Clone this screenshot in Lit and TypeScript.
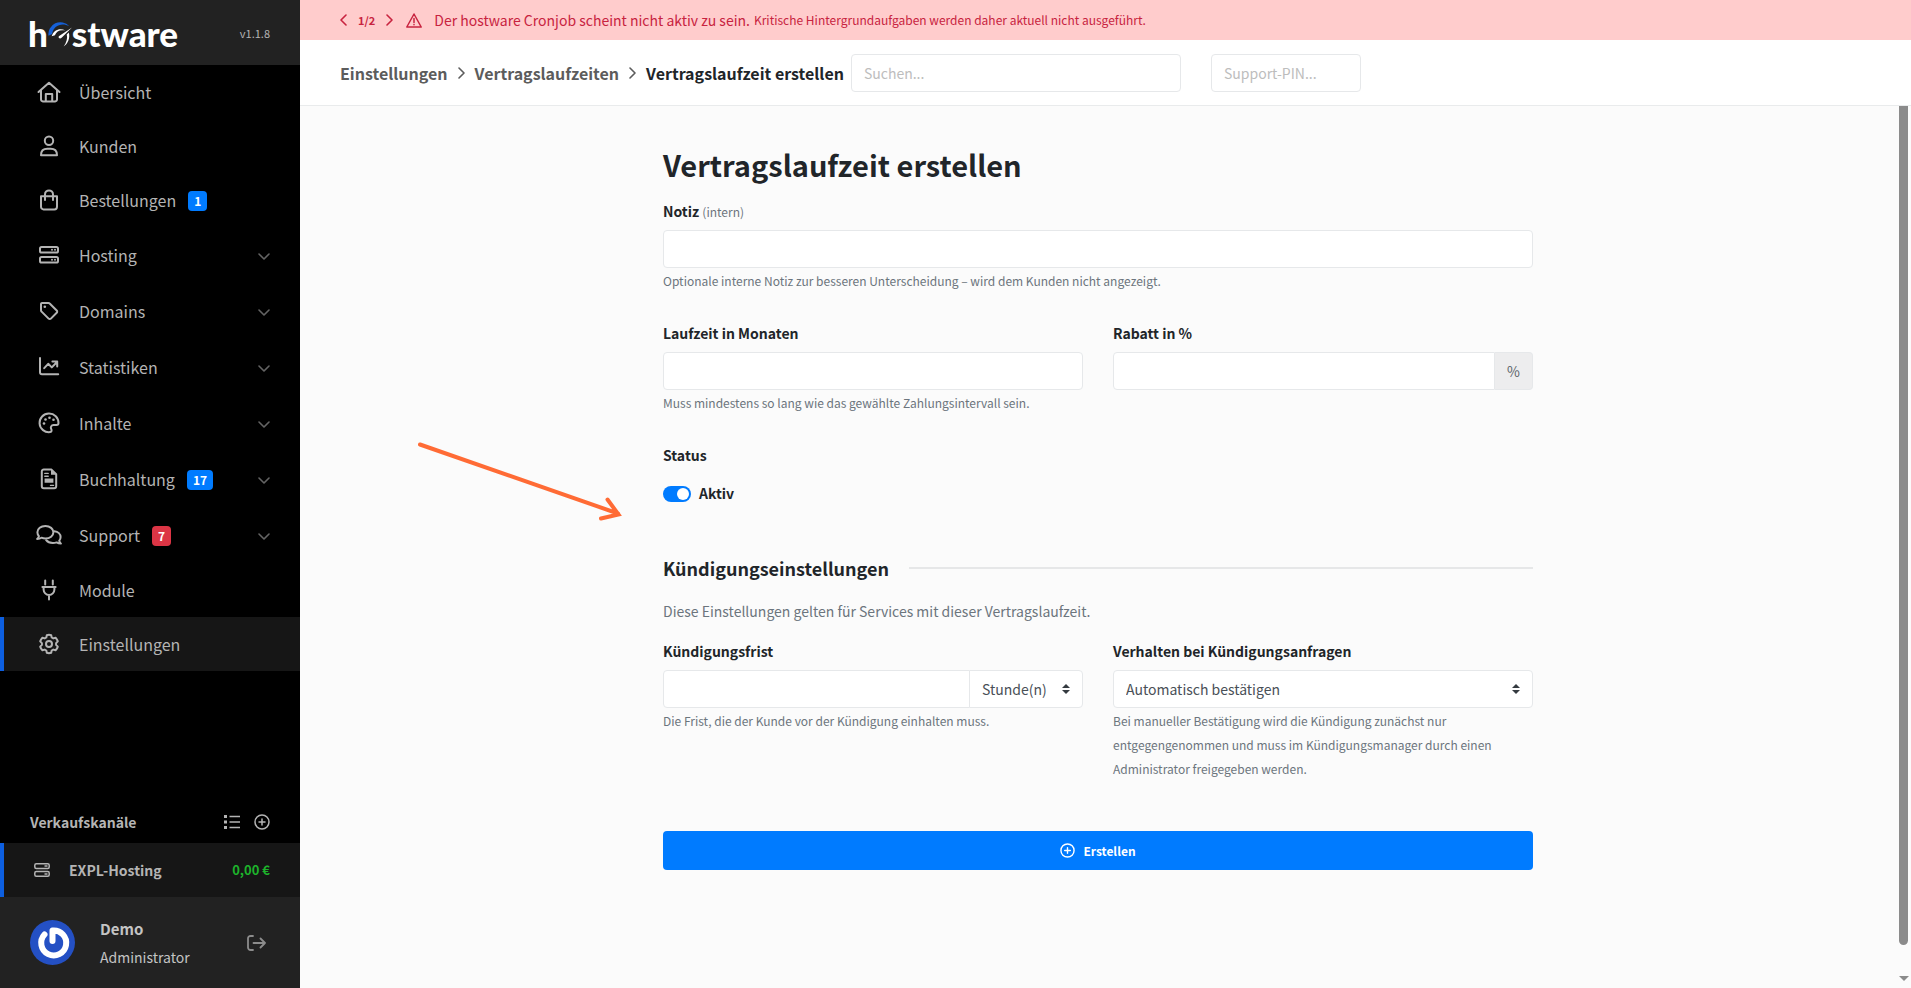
import { LitElement, html, svg, css, nothing, TemplateResult } from "lit";
import { customElement, property } from "lit/decorators.js";

const stroke = (body: TemplateResult) => svg`<g fill="none" stroke="currentColor" stroke-width="2" stroke-linecap="round" stroke-linejoin="round">${body}</g>`;

/* Navigation glyphs, drawn in a 26 x 22 box. */
const glyphs: Record<string, TemplateResult> = {
  home: stroke(svg`<path d="M2.5 11 13 1.8 23.5 11M5 9v9.6a1.8 1.8 0 0 0 1.8 1.8h12.4a1.8 1.8 0 0 0 1.8-1.8V9M9.8 20v-7h6.4v7"/>`),
  user: stroke(svg`<circle cx="13" cy="5.8" r="4.2"/><path d="M5 20.2c0-4.2 2.6-6.4 6.4-6.4h3.2c3.8 0 6.4 2.2 6.4 6.4z"/>`),
  bag: stroke(svg`<path d="M5 7.2h16v10.6a2.6 2.6 0 0 1-2.6 2.6H7.6a2.6 2.6 0 0 1-2.6-2.6zM9 11V5.4a4 4 0 0 1 8 0V11"/>`),
  server: svg`${stroke(svg`<rect x="4" y="3" width="18" height="5.6" rx="1.6"/><rect x="4" y="13" width="18" height="5.6" rx="1.6"/>`)}<g fill="currentColor"><circle cx="16" cy="5.8" r="1"/><circle cx="19" cy="5.8" r="1"/><circle cx="16" cy="15.8" r="1"/><circle cx="19" cy="15.8" r="1"/></g>`,
  tag: svg`${stroke(svg`<path d="M5 3.8v6.5c0 .5.2 1 .6 1.3l7 7a1.600 1.600 0 0 0 2.300 0l5.800-5.800a1.600 1.600 0 0 0 0-2.300l-7-7a1.800 1.800 0 0 0-1.300-.600H6a1 1 0 0 0-1 .900z"/>`)}<circle cx="8.8" cy="6.7" r="1.3" fill="currentColor"/>`,
  chart: stroke(svg`<path d="M4 2v14.2a2 2 0 0 0 2 2h16.2M8.2 12.200l4-4.400 3.600 3.600 5-5.200M16.400 5.600h4.800v4.800"/>`),
  palette: svg`${stroke(svg`<path d="M13 1.600a9.300 9.300 0 1 0 1.200 18.500c1.500-.2 1.700-1.800 1-3-1-1.900.1-4 2.300-4h3c1.200 0 2-.8 2-2C22.500 5.700 18.300 1.600 13 1.600z"/>`)}<g fill="currentColor"><circle cx="8" cy="11.5" r="1.3"/><circle cx="9.5" cy="7.5" r="1.3"/><circle cx="13.5" cy="5.800" r="1.3"/><circle cx="17.5" cy="7.8" r="1.3"/></g>`,
  invoice: svg`${stroke(svg`<path d="M8 1.600h7.500L20.200 6.300v12a2 2 0 0 1-2 2H7.800a2 2 0 0 1-2-2v-14.700a2 2 0 0 1 2.200-2z"/><path d="M8.800 5.400h3.400M8.800 8.200h3.400M14.500 17.400h3" stroke-width="1.4"/>`)}<path d="M15 1.600v5.200h5.200zM8.600 10.400h8.800v4.400H8.600z" fill="currentColor"/>`,
  chat: stroke(svg`<path d="M9.400 2c-4.600 0-8 2.800-8 6.300 0 1.500.6 2.800 1.500 3.900-.3 1-.9 1.900-1.700 2.800 1.700 0 3.200-.5 4.300-1.300 1.200.5 2.500.8 3.900.8 4.600 0 8-2.800 8-6.200S14 2 9.400 2z"/><path d="M18.400 7.200c3.700.4 6.200 2.800 6.200 5.900 0 1.400-.5 2.700-1.400 3.700.3 1 .9 2 1.700 2.800-1.700 0-3.200-.5-4.300-1.200a10 10 0 0 1-3.800.7c-3 0-5.300-1.100-6.600-2.900"/>`),
  plug: stroke(svg`<path d="M9.200 1.400v4M16.800 1.400v4M6.400 8h13.200M7.600 8v2.600a5.400 5.400 0 0 0 10.800 0V8M13 16v4.400"/>`),
  gear: stroke(svg`<path d="M10.800 2.200c1.400-.5 3-.5 4.400 0l.5 2.300 1.600.9 2.300-.7a8.600 8.600 0 0 1 2.200 3.700l-1.700 1.700v1.800l1.700 1.700a8.600 8.600 0 0 1-2.200 3.700l-2.300-.7-1.600.9-.5 2.300c-1.400.5-3 .5-4.400 0l-.5-2.300-1.600-.9-2.300.7a8.600 8.600 0 0 1-2.200-3.700l1.700-1.700v-1.800L4.200 8.400a8.600 8.600 0 0 1 2.200-3.700l2.300.7 1.600-.9z"/><circle cx="13" cy="11" r="3"/>`),
};

interface NavEntry {
  label: string;
  icon: string;
  badge?: string;
  tone?: string;
  sub?: boolean;
  active?: boolean;
}

const entries: NavEntry[] = [
  { label: "Übersicht", icon: "home" },
  { label: "Kunden", icon: "user" },
  { label: "Bestellungen", icon: "bag", badge: "1" },
  { label: "Hosting", icon: "server", sub: true },
  { label: "Domains", icon: "tag", sub: true },
  { label: "Statistiken", icon: "chart", sub: true },
  { label: "Inhalte", icon: "palette", sub: true },
  { label: "Buchhaltung", icon: "invoice", badge: "17", sub: true },
  { label: "Support", icon: "chat", badge: "7", tone: "red", sub: true },
  { label: "Module", icon: "plug" },
  { label: "Einstellungen", icon: "gear", active: true },
];

const plusCircle = (size: number) => html`<svg width=${size} height=${size} viewBox="0 0 16 16" fill="none" stroke="currentColor" stroke-width="1.5" stroke-linecap="round" aria-hidden="true"><circle cx="8" cy="8" r="7"/><path d="M8 5v6M5 8h6"/></svg>`;

const chevron = (d: string, w: number, h: number) => html`<svg width=${w} height=${h} viewBox="0 0 ${w} ${h}" fill="none" stroke="currentColor" stroke-width="1.6" stroke-linecap="round" stroke-linejoin="round" aria-hidden="true"><path d=${d}/></svg>`;

const shared = css`
  * { box-sizing: border-box; }
  a { color: inherit; text-decoration: none; }
  button { font: inherit; color: inherit; background: none; border: 0; padding: 0; cursor: pointer; }
  svg { display: block; flex: none; }
`;

@customElement("app-sidebar")
export class AppSidebar extends LitElement {
  static styles = [shared, css`
    :host { display: flex; flex-direction: column; width: 300px; flex: none; background: #000; color: #b4b4b4; }
    .brand { display: flex; align-items: center; justify-content: space-between; height: 65px; padding: 0 30px 0 28px; background: #222; }
    .logo { display: flex; align-items: center; color: #fff; font: 900 35px/40px Lato, sans-serif; }
    .version { font-size: 11px; line-height: 24px; }
    .item { display: flex; align-items: center; height: 54px; padding: 0 30px 0 32px; border-left: 4px solid transparent; font-size: 16px; line-height: 24px; }
    .item.sub { height: 56px; }
    .item.active { background: #161616; border-left-color: #0d5fe0; }
    .icon { margin-right: 17px; }
    .badge { margin: 2px 0 0 12px; padding: 0 6px; border-radius: 4px; background: #007bff; color: #fff; font-size: 12px; font-weight: 700; line-height: 20px; }
    .badge.red { background: #dc3545; }
    .caret { margin-left: auto; padding-top: 2px; color: #646464; }
    .channels { margin-top: auto; }
    .channels-head { display: flex; align-items: center; gap: 14px; height: 42px; padding: 0 30px; font-size: 14px; font-weight: 600; }
    .channels-head span { flex: 1; }
    .channel { display: flex; align-items: center; height: 54px; padding: 0 30px; border-left: 4px solid #0d5fe0; background: #161616; font-size: 14px; font-weight: 700; line-height: 24px; }
    .channel span { flex: 1; margin-left: 19px; }
    .channel em { font-style: normal; font-weight: 600; font-size: 13px; color: #1db32b; }
    .account { display: flex; align-items: center; height: 91px; padding: 0 34px 0 30px; background: #222; color: #c4c4c4; }
    .who { flex: 1; margin-left: 25px; font-size: 14px; line-height: 28px; }
    .who strong { display: block; font-size: 15px; }
    .out { color: #8c8c8c; }
  `];

  render() {
    return html`
      <div class="brand">
        <a class="logo" href="#" aria-label="hostware">
          <span>h</span>
          <svg width="24" height="32" viewBox="0 0 26 34">
            <path d="M.5 20A13 13 0 0 1 23 9.500C14.500 5 5.500 9.500 4.500 18z" fill="#1560d8"/>
            <path d="M4 20.500c2-6.500 9-9.500 15-6-5.500-1.500-10 .5-11.500 5z" fill="#fff"/>
            <path d="M12 22.500c-1-1-.5-2 .5-2.600L26 11 15 21.800c-1 1-2.200 1.500-3 .7z" fill="#fff"/>
            <path d="M22.500 16.500c1.800 5.500-1 12.500-5.500 15 3-4.500 4.500-9 3.300-13z" fill="#fff"/>
          </svg>
          <span>stware</span>
        </a>
        <span class="version">v1.1.8</span>
      </div>
      <nav>
        ${entries.map((e) => html`
          <a class="item ${e.sub ? "sub" : ""} ${e.active ? "active" : ""}" href="#">
            <svg class="icon" width="26" height="22" viewBox="0 0 26 22" aria-hidden="true">${glyphs[e.icon]}</svg>
            <span>${e.label}</span>
            ${e.badge ? html`<span class="badge ${e.tone ?? ""}">${e.badge}</span>` : nothing}
            ${e.sub ? html`<span class="caret">${chevron("M1 1 6 6 11 1", 12, 7)}</span>` : nothing}
          </a>`)}
      </nav>
      <div class="channels">
        <div class="channels-head">
          <span>Verkaufskanäle</span>
          <button aria-label="Liste"><svg width="16" height="14" viewBox="0 0 16 14" fill="currentColor"><path d="M0 0h3v3H0zM0 5.500h3v3H0zM0 11h3v3H0zM5.500.800H16v1.500H5.500zM5.500 6.300H16v1.500H5.500zM5.500 11.800H16v1.500H5.500z"/></svg></button>
          <button aria-label="Hinzufügen">${plusCircle(16)}</button>
        </div>
        <a class="channel" href="#">
          <svg width="16" height="14" viewBox="0 0 16 14" fill="none" stroke="currentColor" stroke-width="1.5"><rect x=".8" y=".8" width="14.4" height="4.6" rx="1.5"/><rect x=".8" y="8.6" width="14.4" height="4.6" rx="1.5"/><path d="M10.500 3.100h3M10.500 10.900h3"/></svg>
          <span>EXPL-Hosting</span><em>0,00 €</em>
        </a>
      </div>
      <div class="account">
        <svg width="45" height="45" viewBox="0 0 45 45" role="img" aria-label="Avatar">
          <circle cx="22.5" cy="22.5" r="22.5" fill="#2450c4"/>
          <path d="M14.500 14.500A12.500 12.500 0 1 0 22.500 10.500V21" fill="none" stroke="#fff" stroke-width="6" stroke-linecap="round" stroke-linejoin="round"/>
        </svg>
        <div class="who"><strong>Demo</strong>Administrator</div>
        <button class="out" aria-label="Abmelden"><svg width="19" height="16" viewBox="0 0 19 16" fill="none" stroke="currentColor" stroke-width="1.8" stroke-linecap="round" stroke-linejoin="round"><path d="M6 1H3.500A2.500 2.500 0 0 0 1 3.500v9A2.500 2.500 0 0 0 3.500 15H6M6.500 8H18M13.500 3.500 18 8l-4.500 4.500"/></svg></button>
      </div>`;
  }
}

@customElement("app-topbar")
export class AppTopbar extends LitElement {
  static styles = [shared, css`
    :host { display: block; background: #fff; }
    .alert { display: flex; align-items: center; height: 40px; padding: 0 40px; background: #fcc; color: #c8233f; font-size: 14px; line-height: 24px; }
    .count { margin: 0 11px; font-size: 11px; font-weight: 700; }
    .warn { margin: 0 12px 0 13px; }
    .alert small { font-size: 12px; margin-left: 4px; }
    .bar { display: flex; align-items: center; height: 66px; padding: 0 40px; border-bottom: 1px solid #e9ebec; }
    .crumbs { display: flex; align-items: center; gap: 10px; margin-right: 7px; color: #5c5c5c; font-size: 16px; font-weight: 600; line-height: 24px; white-space: nowrap; }
    .crumbs strong { color: #212529; font-weight: 600; }
    .field { height: 38px; padding: 0 12px; border: 1px solid #e6e8ea; border-radius: 4px; background: #fff; font: inherit; font-size: 14px; color: #495057; }
    .field::placeholder { color: #bdbdbd; opacity: 1; }
    .search { width: 330px; margin-right: 30px; }
    .pin { width: 150px; }
  `];

  render() {
    return html`
      <div class="alert" role="alert">
        <button aria-label="Zurück">${chevron("M6 1 1 6 6 11", 7, 12)}</button>
        <span class="count">1/2</span>
        <button aria-label="Weiter">${chevron("M1 1 6 6 1 11", 7, 12)}</button>
        <svg class="warn" width="16" height="15" viewBox="0 0 16 15" fill="none" stroke="currentColor" stroke-width="1.5" stroke-linecap="round" stroke-linejoin="round"><path d="M8 1 15.200 14H.8zM8 5.500v4M8 11.600v.2"/></svg>
        <span>Der hostware Cronjob scheint nicht aktiv zu sein.</span><small>Kritische Hintergrundaufgaben werden daher aktuell nicht ausgeführt.</small>
      </div>
      <header class="bar">
        <nav class="crumbs">
          <a href="#">Einstellungen</a>${chevron("M1 1 6 6 1 11", 7, 12)}
          <a href="#">Vertragslaufzeiten</a>${chevron("M1 1 6 6 1 11", 7, 12)}
          <strong>Vertragslaufzeit erstellen</strong>
        </nav>
        <input class="field search" type="search" placeholder="Suchen..." aria-label="Suchen">
        <input class="field pin" type="text" placeholder="Support-PIN..." aria-label="Support-PIN">
      </header>`;
  }
}

@customElement("term-form")
export class TermForm extends LitElement {
  static styles = [shared, css`
    :host { display: block; flex: 1; min-width: 0; padding: 0 15px; }
    form { position: relative; max-width: 870px; margin: 0 auto; padding: 40px 0 60px; }
    h1 { margin: 0 0 15px; font-size: 29px; line-height: 36px; font-weight: 700; }
    .row { display: grid; grid-template-columns: 1fr 1fr; gap: 30px; }
    .group { margin-bottom: 26px; min-width: 0; }
    .label { display: block; margin-bottom: 4px; padding: 0; font-size: 14px; line-height: 29px; font-weight: 600; }
    .label small { font-size: 12px; font-weight: 400; color: #6c757d; }
    .control { display: block; width: 100%; min-width: 0; height: 38px; padding: 0 12px; border: 1px solid #e6e8ea; border-radius: 4px; background: #fff; color: #495057; font: inherit; font-size: 14px; }
    select.control { appearance: none; grid-area: 1 / 1; padding-right: 35px; }
    .help { margin: 1px 0 0; color: #6c757d; font-size: 12px; line-height: 24px; }
    .joined { display: flex; }
    .joined .control:first-child { flex: 1; border-radius: 4px 0 0 4px; }
    .joined .picker { margin-left: -1px; }
    .joined .picker .control { border-radius: 0 4px 4px 0; }
    .addon { display: flex; align-items: center; padding: 0 12px; border: 1px solid #e6e8ea; border-left: 0; border-radius: 0 4px 4px 0; background: #ededee; color: #5f656b; font-size: 14px; }
    .picker { display: grid; }
    .picker svg { grid-area: 1 / 1; align-self: center; justify-self: end; margin-right: 13px; color: #343a40; pointer-events: none; }
    fieldset { margin: 0 0 42px; padding: 0; border: 0; }
    .switch { display: flex; align-items: center; gap: 8px; margin-top: 5px; font-size: 14px; line-height: 29px; font-weight: 600; }
    .switch input { appearance: none; display: flex; align-items: center; justify-content: flex-end; width: 28px; height: 16px; margin: 0; padding: 2px; border-radius: 8px; background: #007bff; }
    .switch input::after { content: ""; width: 12px; height: 12px; border-radius: 6px; background: #fff; }
    .section { display: flex; align-items: center; gap: 20px; margin: 0 0 11px; font-size: 18px; line-height: 36px; font-weight: 700; }
    .section::after { content: ""; flex: 1; height: 2px; background: #e6e7e8; }
    .intro { margin: 0 0 11px; color: #6c757d; font-size: 14px; line-height: 29px; }
    .submit { display: flex; align-items: center; justify-content: center; gap: 8px; width: 100%; height: 39px; margin-top: 24px; border-radius: 4px; background: #007bff; color: #fff; font-size: 12px; font-weight: 700; }
    .pointer { position: absolute; left: -247px; top: 334px; pointer-events: none; }
  `];

  private arrows() {
    return html`<svg width="8" height="10" viewBox="0 0 8 10" fill="currentColor" aria-hidden="true"><path d="M4 0 8 4H0zM4 10 0 6h8z"/></svg>`;
  }

  render() {
    return html`
      <form @submit=${(e: Event) => e.preventDefault()}>
        <h1>Vertragslaufzeit erstellen</h1>
        <div class="group">
          <label class="label" for="note">Notiz <small>(intern)</small></label>
          <input class="control" id="note" type="text">
          <p class="help">Optionale interne Notiz zur besseren Unterscheidung – wird dem Kunden nicht angezeigt.</p>
        </div>
        <div class="row">
          <div class="group">
            <label class="label" for="months">Laufzeit in Monaten</label>
            <input class="control" id="months" type="text">
            <p class="help">Muss mindestens so lang wie das gewählte Zahlungsintervall sein.</p>
          </div>
          <div class="group">
            <label class="label" for="discount">Rabatt in %</label>
            <div class="joined"><input class="control" id="discount" type="text"><span class="addon">%</span></div>
          </div>
        </div>
        <fieldset>
          <legend class="label">Status</legend>
          <label class="switch"><input type="checkbox" role="switch" checked>Aktiv</label>
        </fieldset>
        <h2 class="section">Kündigungseinstellungen</h2>
        <p class="intro">Diese Einstellungen gelten für Services mit dieser Vertragslaufzeit.</p>
        <div class="row">
          <div class="group">
            <label class="label" for="period">Kündigungsfrist</label>
            <div class="joined">
              <input class="control" id="period" type="text">
              <div class="picker"><select class="control" aria-label="Einheit"><option>Stunde(n)</option></select>${this.arrows()}</div>
            </div>
            <p class="help">Die Frist, die der Kunde vor der Kündigung einhalten muss.</p>
          </div>
          <div class="group">
            <label class="label" for="mode">Verhalten bei Kündigungsanfragen</label>
            <div class="picker"><select class="control" id="mode"><option>Automatisch bestätigen</option></select>${this.arrows()}</div>
            <p class="help">Bei manueller Bestätigung wird die Kündigung zunächst nur entgegengenommen und muss im Kündigungsmanager durch einen Administrator freigegeben werden.</p>
          </div>
        </div>
        <button class="submit" type="submit">${plusCircle(15)}<span>Erstellen</span></button>
        <svg class="pointer" width="208" height="84" viewBox="0 0 208 84" fill="none" stroke="#ff6b35" stroke-width="4" stroke-linecap="round" aria-hidden="true"><path d="M4 4.500 202 73.500M191.500 59.500 202.500 74.500 185 78.500"/></svg>
      </form>`;
  }
}

@customElement("app-root")
export class AppRoot extends LitElement {
  @property() lang = "de";

  static styles = [shared, css`
    :host { display: flex; height: 100vh; overflow: hidden; background: #fbfbfb; color: #212529; font-family: "Noto Sans CJK SC", "Noto Sans", sans-serif; font-size: 14px; }
    .page { display: flex; flex-direction: column; flex: 1; min-width: 0; }
    .content { display: flex; flex: 1; min-height: 0; }
    .scroll { display: flex; flex-direction: column; align-items: center; width: 15px; padding: 0 3px 7px; }
    .thumb { width: 9px; flex: 1; margin-bottom: 31px; border-radius: 0 0 5px 5px; background: #8b8b8b; }
    .down { width: 9px; border: solid transparent; border-width: 5px 5px 0; border-top-color: #8b8b8b; }
  `];

  render() {
    return html`
      <app-sidebar></app-sidebar>
      <div class="page">
        <app-topbar></app-topbar>
        <main class="content">
          <term-form></term-form>
          <div class="scroll" aria-hidden="true"><div class="thumb"></div><div class="down"></div></div>
        </main>
      </div>`;
  }
}
